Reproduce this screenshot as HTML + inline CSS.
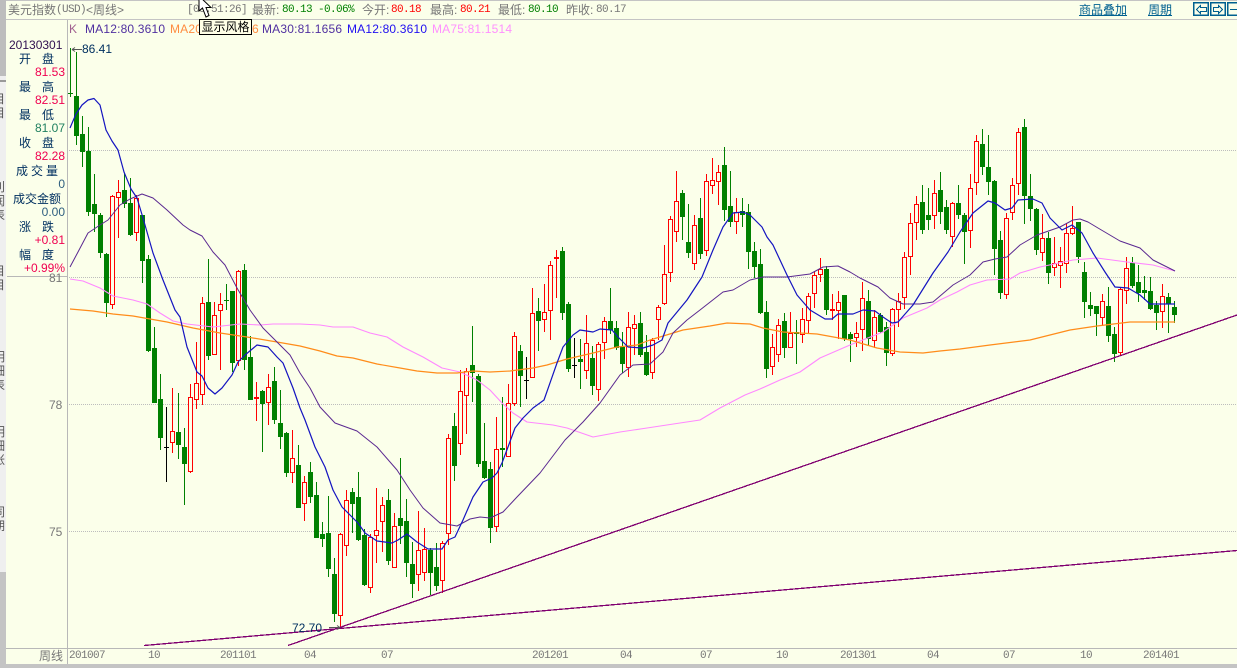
<!DOCTYPE html>
<html>
<head>
<meta charset="utf-8">
<style>
html,body{margin:0;padding:0}
body{width:1237px;height:668px;overflow:hidden;background:#FBFFEA;position:relative;font-family:"Liberation Sans","WenQuanYi Zen Hei","Noto Sans CJK SC",sans-serif}
.t{position:absolute;white-space:pre;font-size:12px;line-height:14px}
.m{font-family:"Liberation Mono","WenQuanYi Zen Hei",monospace;font-size:11px;letter-spacing:-.6px}
.g{color:#777}
.gr{color:#008000}
.r{color:#f00}
.n{color:#003060}
.v{color:#f00050;text-align:right;right:1172px}
.h{letter-spacing:.18px}
.bar{position:absolute;background:#c4c4c4}
.btn{position:absolute;top:2px;height:12px;width:14px;border:1px solid #006090;box-shadow:inset 0 0 0 .5px #006090}
</style>
</head>
<body>
<div class="bar" style="left:0;top:0;width:1237px;height:1px"></div>
<div class="bar" style="left:6px;top:19px;width:1231px;height:1px"></div>
<div class="bar" style="left:67px;top:20px;width:1px;height:644px;background:#b8b8b8"></div>
<div class="bar" style="left:6px;top:648px;width:1231px;height:1px;background:#b8b8b8"></div>
<div class="bar" style="left:0;top:664px;width:1237px;height:4px"></div>
<div class="bar" style="left:7px;top:276px;width:60px;height:1px;background:#b8b8b8"></div>

<div style="position:absolute;left:0;top:0;width:6px;height:668px;overflow:hidden;background:#efefef;border-right:0">
<div style="position:absolute;left:0;top:0;width:6px;height:76px;background:#bdbdbd"></div>
<div style="position:absolute;left:0;top:80px;width:6px;height:2px;background:#999"></div>
<div class="t" style="left:-7px;top:92px;color:#555;width:13px;white-space:normal">目目</div>
<div class="t" style="left:-7px;top:180px;color:#555;width:13px;white-space:normal">利润表</div>
<div class="t" style="left:-7px;top:264px;color:#555;width:13px;white-space:normal">目目</div>
<div class="t" style="left:-7px;top:350px;color:#555;width:13px;white-space:normal">明细表</div>
<div class="t" style="left:-7px;top:425px;color:#555;width:13px;white-space:normal">明细账</div>
<div class="t" style="left:-7px;top:505px;color:#555;width:13px;white-space:normal">同期</div>
<div style="position:absolute;left:0;top:572px;width:6px;height:96px;background:#c4c4c4"></div>
</div>

<svg width="1237" height="668" style="position:absolute;left:0;top:0">
<g stroke="#bdbdbd" stroke-width="1" stroke-dasharray="1 1" fill="none" shape-rendering="crispEdges">
<path d="M69 150.5H1237M69 277.5H1237M69 404.5H1237M69 531.5H1237"/>
</g>
<g fill="none" shape-rendering="crispEdges">
<path stroke="#008000" d="M70.5 48V97M76.5 52V145M82.5 116V167M88.5 127V216M94.5 174V232M100.5 213V258M106.5 253V317M124.5 173V208M130.5 178V236M142.5 215V283M148.5 255V352M154.5 327V403M160.5 374V450M178.5 393V459M184.5 428V505M208.5 259V360M226.5 284V310M232.5 291V372M244.5 264V370M250.5 336V400M262.5 390V452M274.5 367V424M280.5 390V449M286.5 432V477M298.5 445V508M310.5 462V503M316.5 482V538M322.5 522V547M328.5 496V577M334.5 558V622M352.5 488V533M358.5 472V541M364.5 529V586M388.5 489V565M400.5 458V544M406.5 499V577M412.5 542V598M430.5 548V595M436.5 543V591M454.5 413V481M472.5 326V402M478.5 374V467M484.5 423V479M490.5 462V543M502.5 397V467M520.5 345V407M538.5 298V351M562.5 247V320M568.5 302V372M580.5 339V389M592.5 346V395M610.5 288V334M616.5 321V350M622.5 332V373M640.5 312V357M646.5 335V376M682.5 190V240M688.5 204V258M700.5 198V259M724.5 147V221M730.5 171V227M742.5 198V227M748.5 204V269M754.5 242V278M760.5 249V314M766.5 301V378M784.5 313V358M796.5 320V364M826.5 266V315M844.5 295V341M850.5 332V362M868.5 290V345M880.5 313V333M886.5 322V366M922.5 185V234M928.5 188V230M940.5 172V224M946.5 200V234M958.5 185V219M964.5 213V264M982.5 129V175M988.5 135V195M994.5 180V275M1000.5 231V299M1024.5 119V224M1030.5 174V221M1036.5 208V255M1048.5 232V284M1078.5 222V263M1084.5 262V318M1090.5 292V316M1096.5 306V336M1108.5 287V342M1114.5 327V362M1132.5 257V288M1138.5 265V302M1144.5 276V300M1150.5 277V310M1156.5 301V330M1168.5 293V333M1174.5 301V323"/>
<path stroke="#008000" stroke-width="5" d="M70.5 93V94M76.5 96V136M82.5 134V152M88.5 151V212M94.5 204V214M100.5 215V253M106.5 254V303M124.5 190V204M130.5 203V235M142.5 215V261M148.5 259V351M154.5 348V403M160.5 399V438M178.5 432V445M184.5 447V464M208.5 302V356M226.5 300V301M232.5 291V363M244.5 270V360M250.5 357V400M262.5 391V404M274.5 381V420M280.5 423V437M286.5 433V473M298.5 465V508M310.5 472V497M316.5 495V538M322.5 534V539M328.5 533V569M334.5 574V614M352.5 492V504M358.5 497V540M364.5 535V585M388.5 500V561M400.5 518V526M406.5 521V563M412.5 564V584M430.5 550V573M436.5 567V586M454.5 426V466M472.5 365V373M478.5 376V464M484.5 461V478M490.5 469V528M502.5 448V450M520.5 351V376M538.5 311V321M562.5 251V313M568.5 304V369M580.5 359V362M592.5 358V386M610.5 321V330M616.5 328V348M622.5 347V364M640.5 323V355M646.5 352V375M682.5 193V217M688.5 242V253M700.5 218V254M724.5 165V210M730.5 206V222M742.5 211V215M748.5 212V252M754.5 251V267M760.5 264V313M766.5 312V369M784.5 321V348M796.5 332V334M826.5 269V310M844.5 295V339M850.5 334V339M868.5 301V339M880.5 315V332M886.5 327V353M922.5 202V230M928.5 215V220M940.5 190V212M946.5 207V230M958.5 203V215M964.5 215V232M982.5 144V167M988.5 167V182M994.5 181V249M1000.5 240V293M1024.5 127V196M1030.5 196V209M1036.5 209V250M1048.5 238V273M1078.5 222V257M1084.5 272V302M1090.5 305V309M1096.5 306V314M1108.5 306V336M1114.5 334V354M1132.5 263V286M1138.5 282V293M1144.5 290V293M1150.5 291V309M1156.5 305V313M1168.5 297V304M1174.5 307V315"/>
<path stroke="#f00" d="M112.5 195V309M118.5 180V238M136.5 195V241M172.5 388V453M190.5 384V473M196.5 342V409M202.5 297V405M214.5 302V355M220.5 293V370M238.5 270V366M268.5 374V425M292.5 430V483M304.5 476V521M340.5 533V628M346.5 490V556M370.5 534V593M376.5 488V563M382.5 497V552M394.5 513V567M418.5 511V591M424.5 528V581M442.5 541V593M448.5 434V545M460.5 370V455M466.5 368V434M496.5 417V532M508.5 384V457M514.5 332V406M532.5 288V378M544.5 284V332M550.5 261V340M586.5 315V379M598.5 342V401M604.5 317V359M628.5 312V377M634.5 315V355M652.5 338V379M658.5 305V340M664.5 245V305M670.5 216V282M676.5 171V242M694.5 215V270M706.5 174V256M712.5 158V194M718.5 165V205M736.5 198V234M772.5 334V375M778.5 319V362M790.5 312V348M802.5 308V343M808.5 293V334M814.5 271V308M820.5 258V282M838.5 291V339M856.5 322V347M862.5 282V351M874.5 310V348M892.5 308V356M898.5 293V327M904.5 252V309M910.5 213V275M916.5 196V240M934.5 180V229M952.5 202V247M970.5 174V248M976.5 135V195M1006.5 213V299M1012.5 178V220M1018.5 128V195M1042.5 214V261M1054.5 237V276M1060.5 247V288M1066.5 223V273M1072.5 206V235M1102.5 294V326M1120.5 287V355M1126.5 257V304M1162.5 284V328M256.5 382V421M556.5 250V298M832.5 294V320"/>
<path stroke="#f00" stroke-width="5" d="M256.5 397V399M556.5 257V259M832.5 309V311"/>
<path stroke="#f00" fill="#FBFFEA" d="M110.5 196.5h4V304.5h-4zM116.5 192.5h4V197.5h-4zM134.5 198.5h4V232.5h-4zM170.5 431.5h4V442.5h-4zM188.5 397.5h4V471.5h-4zM194.5 383.5h4V399.5h-4zM200.5 303.5h4V394.5h-4zM212.5 315.5h4V354.5h-4zM218.5 304.5h4V310.5h-4zM236.5 271.5h4V360.5h-4zM266.5 387.5h4V402.5h-4zM290.5 458.5h4V472.5h-4zM302.5 482.5h4V503.5h-4zM338.5 534.5h4V615.5h-4zM344.5 500.5h4V545.5h-4zM368.5 537.5h4V587.5h-4zM374.5 530.5h4V535.5h-4zM380.5 505.5h4V521.5h-4zM392.5 526.5h4V567.5h-4zM416.5 550.5h4V574.5h-4zM422.5 549.5h4V572.5h-4zM440.5 543.5h4V580.5h-4zM446.5 438.5h4V533.5h-4zM458.5 391.5h4V443.5h-4zM464.5 371.5h4V395.5h-4zM494.5 449.5h4V526.5h-4zM506.5 403.5h4V456.5h-4zM512.5 336.5h4V403.5h-4zM530.5 313.5h4V377.5h-4zM542.5 312.5h4V319.5h-4zM548.5 265.5h4V310.5h-4zM584.5 343.5h4V370.5h-4zM596.5 344.5h4V389.5h-4zM602.5 321.5h4V342.5h-4zM626.5 327.5h4V367.5h-4zM632.5 324.5h4V328.5h-4zM650.5 340.5h4V372.5h-4zM656.5 307.5h4V319.5h-4zM662.5 274.5h4V303.5h-4zM668.5 219.5h4V272.5h-4zM674.5 201.5h4V231.5h-4zM692.5 225.5h4V263.5h-4zM704.5 181.5h4V250.5h-4zM710.5 180.5h4V185.5h-4zM716.5 172.5h4V181.5h-4zM734.5 212.5h4V221.5h-4zM770.5 347.5h4V366.5h-4zM776.5 325.5h4V354.5h-4zM788.5 333.5h4V347.5h-4zM800.5 319.5h4V334.5h-4zM806.5 296.5h4V320.5h-4zM812.5 275.5h4V293.5h-4zM818.5 269.5h4V274.5h-4zM836.5 302.5h4V310.5h-4zM854.5 333.5h4V337.5h-4zM860.5 298.5h4V329.5h-4zM872.5 317.5h4V340.5h-4zM890.5 309.5h4V353.5h-4zM896.5 301.5h4V309.5h-4zM902.5 257.5h4V297.5h-4zM908.5 223.5h4V256.5h-4zM914.5 204.5h4V222.5h-4zM932.5 193.5h4V215.5h-4zM950.5 203.5h4V236.5h-4zM968.5 188.5h4V230.5h-4zM974.5 141.5h4V182.5h-4zM1004.5 218.5h4V294.5h-4zM1010.5 185.5h4V212.5h-4zM1016.5 132.5h4V183.5h-4zM1040.5 238.5h4V252.5h-4zM1052.5 263.5h4V267.5h-4zM1058.5 261.5h4V265.5h-4zM1064.5 233.5h4V263.5h-4zM1070.5 228.5h4V233.5h-4zM1100.5 301.5h4V317.5h-4zM1118.5 289.5h4V352.5h-4zM1124.5 268.5h4V290.5h-4zM1160.5 296.5h4V311.5h-4z"/>
<path stroke="#000" d="M166.5 407V482M526.5 357V399M574.5 338V378"/>
<path stroke="#000" d="M164 447.5h5M524 380.5h5M572 365.5h5"/>
</g>
<g fill="none" stroke-linejoin="round">
<polyline stroke="#FF88FF" stroke-width="1.1" points="70,279 83,281 100,288 113,296 133,300 147,304 160,313 173,321 187,324 213,327 240,324 260,325 273,324 300,324 320,325 333,327 353,327 370,333 387,337 403,347 423,357 442,368 460,372 477,380 490,390 502,403 513,413 527,422 553,425 567,428 593,437 620,432 647,428 680,423 700,420 720,408 745,395 760,389 780,380 800,372 820,358 850,345 883,332 903,318 927,308 940,300 957,292 970,285 987,280 1010,279 1020,273 1040,267 1073,260 1097,258 1127,262 1153,265 1175,271"/>
<polyline stroke="#FF8C1A" stroke-width="1.2" points="70,309 93,311 113,314 133,316 167,322 193,328 220,333 247,337 277,342 300,346 320,351 337,356 353,358 377,364 400,368 417,371 437,373 457,373 473,371 490,372 510,371 533,368 547,365 567,359 593,353 617,347 637,345 650,340 683,330 710,326 727,323 750,324 763,328 783,332 817,334 850,340 877,348 900,352 923,353 940,351 960,349 990,345 1030,340 1070,330 1097,326 1130,322 1175,322"/>
<polyline stroke="#5A2890" stroke-width="1" points="70,267 78,252 88,233 100,225 108,220 120,205 130,199 142,194 153,198 167,210 183,225 190,230 202,236 213,252 225,265 237,288 250,310 263,328 277,342 290,355 300,373 310,388 320,407 335,423 357,431 377,447 397,470 410,490 423,508 440,523 457,526 470,519 480,517 490,518 503,512 517,497 540,473 565,440 583,422 600,403 620,375 633,365 650,364 663,352 673,333 687,320 700,310 723,292 733,290 750,280 763,277 787,277 810,274 823,267 838,266 850,272 860,278 878,287 890,298 903,304 920,304 933,302 953,285 970,275 983,262 995,259 1007,257 1020,245 1037,235 1060,227 1073,220 1080,219 1088,222 1098,228 1120,241 1140,248 1153,260 1175,271"/>
<polyline stroke="#1414C0" stroke-width="1.2" points="70,128 76,114 82,105 88,100 94,98.5 100,105 106,130 112,141 118,150 124,172 131,189 137,198 143,218 153,253 163,280 175,310 180,317 187,347 197,372 202,376 208,388 215,394 222,388 232,375 238,362 245,355 257,345 268,347 277,357 283,363 293,388 300,408 305,420 315,447 325,467 333,490 342,507 350,515 358,523 365,533 377,541 392,543 398,540 407,534 417,542 428,549 442,549 448,540 455,537 463,520 473,497 483,482 492,478 497,473 502,463 508,447 515,428 523,418 533,408 544,400 557,363 563,347 573,335 580,330 593,332 600,329 612,330 618,337 628,347 643,348 653,345 662,340 668,323 687,300 702,277 713,250 723,227 733,213 743,212 750,215 762,227 767,237 773,245 787,275 797,295 810,310 825,319 832,319 838,314 853,314 863,310 875,311 883,317 892,323 898,322 913,305 933,273 948,252 960,232 973,213 988,201 995,203 1005,210 1012,208 1018,200 1033,199 1042,203 1050,218 1062,230 1072,225 1082,233 1093,253 1105,272 1115,287 1128,288 1140,295 1150,304 1175,304"/>
<path stroke="#800070" stroke-width="1.3" shape-rendering="crispEdges" d="M288 645.500L1237 315M144 645.500L1237 550.500"/>
<path stroke="#555" stroke-width="1" d="M72 49.500H82M72 49.500l3-2M72 49.500l3 2M329 627.500H340M340 627.500l-3-2M340 627.500l-3 2"/>
</g>
</svg>

<div class="t g" style="left:8px;top:3px">美元指数</div>
<div class="t g m" style="left:56px;top:3px">(USD)</div>
<div class="t g" style="left:86px;top:3px">&lt;周线&gt;</div>
<div class="t g m" style="left:187px;top:3px">[09:51:26]</div>
<div class="t g" style="left:252px;top:3px">最新:</div>
<div class="t gr m" style="left:282px;top:3px">80.13</div>
<div class="t gr m" style="left:318px;top:3px">-0.06%</div>
<div class="t g" style="left:362px;top:3px">今开:</div>
<div class="t r m" style="left:391px;top:3px">80.18</div>
<div class="t g" style="left:430px;top:3px">最高:</div>
<div class="t r m" style="left:460px;top:3px">80.21</div>
<div class="t g" style="left:498px;top:3px">最低:</div>
<div class="t gr m" style="left:528px;top:3px">80.10</div>
<div class="t g" style="left:566px;top:3px">昨收:</div>
<div class="t g m" style="left:596px;top:3px">80.17</div>
<div class="t" style="left:1079px;top:3px;color:#006090;text-decoration:underline">商品叠加</div>
<div class="t" style="left:1148px;top:3px;color:#006090;text-decoration:underline">周期</div>
<div class="btn" style="left:1193px"></div>
<div class="btn" style="left:1210px"></div>
<div class="btn" style="left:1227px;width:12px"></div>
<svg width="50" height="16" style="position:absolute;left:1190px;top:1px" fill="none" stroke="#006090" shape-rendering="crispEdges"><path d="M6.500 8.500L10.500 4.500V6.500H16.500V10.500H10.500V12.500Z"/><path d="M32.500 8.500L28.500 4.500V6.500H23.500V10.500H28.500V12.500Z"/><path d="M40 8.500H47"/></svg>

<div class="t h" style="left:69px;top:22px;color:#a06090">K</div>
<div class="t h" style="left:85px;top:22px;color:#5030a0">MA12:80.3610</div>
<div class="t h" style="left:170px;top:22px;color:#ff8c40">MA20:80.931</div>
<div class="t h" style="left:252px;top:22px;color:#ff8c40">6</div>
<div class="t h" style="left:262px;top:22px;color:#5030a0">MA30:81.1656</div>
<div class="t h" style="left:347px;top:22px;color:#2010f0">MA12:80.3610</div>
<div class="t h" style="left:432px;top:22px;color:#ff90ff">MA75:81.1514</div>

<div class="t" style="left:9px;top:38px;color:#301050">20130301</div>
<div class="t n" style="left:82px;top:42px">86.41</div>
<div class="t n" style="left:19px;top:52px">开</div><div class="t n" style="left:42px;top:52px">盘</div>
<div class="t v" style="top:65px">81.53</div>
<div class="t n" style="left:19px;top:80px">最</div><div class="t n" style="left:42px;top:80px">高</div>
<div class="t v" style="top:93px">82.51</div>
<div class="t n" style="left:19px;top:108px">最</div><div class="t n" style="left:42px;top:108px">低</div>
<div class="t v" style="top:121px;color:#208060">81.07</div>
<div class="t n" style="left:19px;top:136px">收</div><div class="t n" style="left:42px;top:136px">盘</div>
<div class="t v" style="top:149px">82.28</div>
<div class="t n" style="left:16px;top:164px;letter-spacing:3px">成交量</div>
<div class="t v" style="top:177px;color:#306080">0</div>
<div class="t n" style="left:13px;top:192px">成交金额</div>
<div class="t v" style="top:205px;color:#306080">0.00</div>
<div class="t n" style="left:19px;top:220px">涨</div><div class="t n" style="left:42px;top:220px">跌</div>
<div class="t v" style="top:233px">+0.81</div>
<div class="t n" style="left:19px;top:248px">幅</div><div class="t n" style="left:42px;top:248px">度</div>
<div class="t v" style="top:261px">+0.99%</div>

<div class="t g" style="left:49px;top:271px">81</div>
<div class="t g" style="left:49px;top:398px">78</div>
<div class="t g" style="left:49px;top:525px">75</div>
<div class="t n" style="left:292px;top:621px">72.70</div>

<div class="t g" style="left:39px;top:649px">周线</div>
<div class="t g m" style="left:69px;top:649px">201007</div>
<div class="t g m" style="left:148px;top:649px">10</div>
<div class="t g m" style="left:220px;top:649px">201101</div>
<div class="t g m" style="left:304px;top:649px">04</div>
<div class="t g m" style="left:381px;top:649px">07</div>
<div class="t g m" style="left:532px;top:649px">201201</div>
<div class="t g m" style="left:620px;top:649px">04</div>
<div class="t g m" style="left:700px;top:649px">07</div>
<div class="t g m" style="left:776px;top:649px">10</div>
<div class="t g m" style="left:840px;top:649px">201301</div>
<div class="t g m" style="left:927px;top:649px">04</div>
<div class="t g m" style="left:1003px;top:649px">07</div>
<div class="t g m" style="left:1080px;top:649px">10</div>
<div class="t g m" style="left:1143px;top:649px">201401</div>

<div class="t" style="left:199px;top:19px;width:51px;height:14px;border:1px solid #000;background:#FFFFE6;color:#000;text-align:center;line-height:15px">显示风格</div>
<svg width="16" height="22" style="position:absolute;left:198px;top:0"><path d="M1 -4L1 11L4.500 8L8 17L11 15.500L8 7.500L13 7.500Z" fill="#fff" stroke="#000" stroke-width="1"/></svg>
</body>
</html>
